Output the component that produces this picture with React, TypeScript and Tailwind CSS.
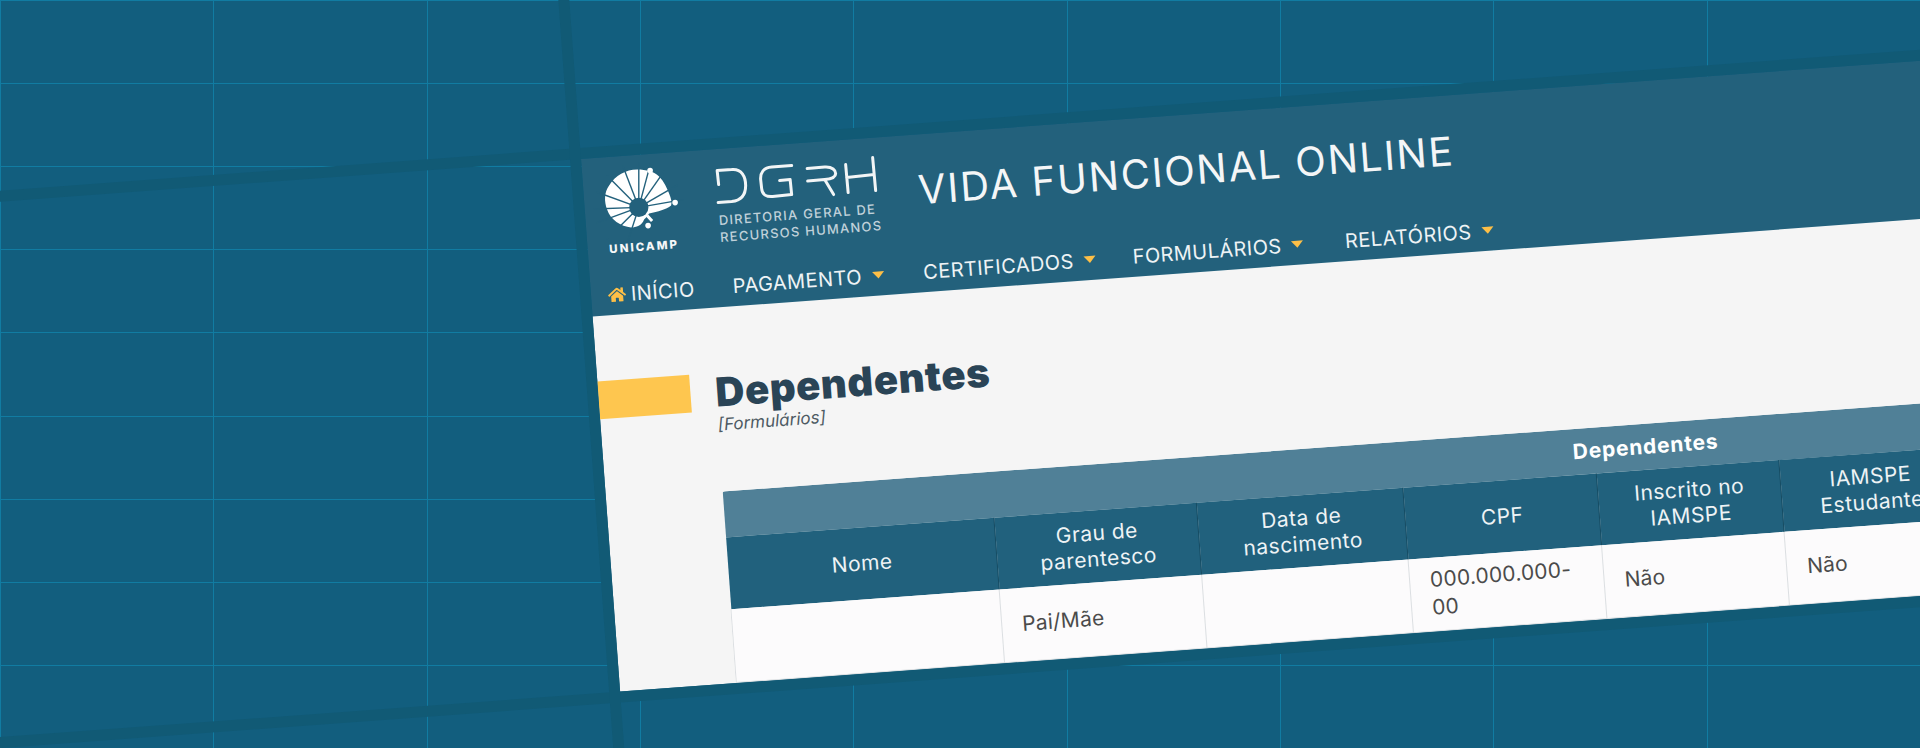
import React from "react";
import { FaHome } from "react-icons/fa";

const font = "font-['Inter','Noto_Sans',sans-serif]";

function Caret() {
  return <span className="ml-[10px] h-0 w-0 border-x-[6px] border-t-[7px] border-x-transparent border-t-[#fdbf47]" />;
}

function UnicampLogo() {
  return (
    <svg viewBox="0 0 80 80" className="h-[80px] w-[80px] overflow-visible">
      <g transform="rotate(4.2)">
        <path
          d="M37 10 C46 10 54 12 59 17 C64 22 67 29 69 34 C71 39 72 42 71 46 C66 50 58 52 49 54 L46 58 L44 60 C42 66 36 68 31 68 C21 67 10 60 7 50 C4 42 4 33 9 26 C15 16 26 10 37 10 Z"
          fill="#ffffff"
        />
        {[-111, -90, -75, -55, -30, -10, 178, 160, 135, 108, -135, -160].map((a) => {
          const r = (a * Math.PI) / 180;
          const x = 38.7 + 45 * Math.cos(r);
          const y = 47.8 + 45 * Math.sin(r);
          return <line key={a} x1="38.7" y1="47.8" x2={x} y2={y} stroke="#23617c" strokeWidth="1.4" />;
        })}
        <circle cx="38.7" cy="47.8" r="9.6" fill="#23617c" />
        <line x1="47" y1="56" x2="52" y2="61.5" stroke="#ffffff" strokeWidth="3" />
        <circle cx="50" cy="11" r="2.8" fill="#ffffff" />
        <circle cx="75" cy="43" r="2.8" fill="#ffffff" />
        <circle cx="48" cy="66" r="2.8" fill="#ffffff" />
      </g>
    </svg>
  );
}

function DgrhLogo() {
  return (
    <svg viewBox="0 0 180 63" className="h-[63px] w-[180px] overflow-visible" fill="none">
      <g transform="rotate(4.2)" stroke="#f2f5f6" strokeWidth="3" strokeLinecap="round" strokeLinejoin="round">
        <path d="M9 35 L7.5 21 L22 20 C32 19 36 27 36 36 C36 45 32 51 22 52 L8.5 53" />
        <path d="M82 16 L62 17.5 C54 18 50.5 23 51 30 L52 39 C52.5 45 57 47.5 63 47 L82 45 L80.5 30 L70 31" />
        <path d="M97.5 19 L115 17.5 C123 17 126 21 126 24 C126 27 123 29.5 115 30 L98 31.5 M115 30 L124 45" />
        <path d="M136 15 L138.5 43 M163 8 L166 41 M137 28 L164.5 25" />
      </g>
    </svg>
  );
}

function Th({ children, last }: { children?: React.ReactNode; last?: boolean }) {
  return (
    <th
      className={
        "h-[72px] bg-[#21617d] px-[8px] text-center align-middle text-[21px] leading-[26px] font-normal tracking-[0.5px] text-[#eef3f5] " +
        (last ? "" : "border-r border-[#174d64]")
      }
    >
      {children}
    </th>
  );
}

function Td({ children }: { children?: React.ReactNode }) {
  return (
    <td className="h-[73px] border-r border-b border-l border-[#dcdfe2] bg-[#fcfbfc] px-[20px] pb-[1px] align-middle text-[21px] leading-[28px] font-normal tracking-[0.2px] text-[#4b4b4b]">
      {children}
    </td>
  );
}

export default function App() {
  return (
    <div className={"relative h-[748px] w-full overflow-hidden bg-[#125e7e] " + font}>
      <div className="grid h-full w-full grid-cols-9 grid-rows-9">
        {Array.from({ length: 81 }).map((_, i) => (
          <div key={i} className="border-t border-l border-[#117ca2]" />
        ))}
      </div>

      <div className="absolute top-[159px] left-[581px] h-[534px] w-[2082px] origin-top-left -rotate-[4.2deg]">
        <div className="absolute -top-[11px] -left-[1000px] h-[11px] w-[4500px] bg-[#115a75]" />
        <div className="absolute top-full -left-[1000px] h-[11px] w-[4500px] bg-[#115a75]" />
        <div className="absolute -top-[1000px] -left-[11px] h-[3000px] w-[11px] bg-[#115a75]" />

        <header className="flex h-[158px] flex-col bg-[#23617c]">
          <div className="flex h-[117px] items-start">
            <div className="mt-[2px] ml-[19px] flex w-[80px] flex-col items-center">
              <UnicampLogo />
              <span className="mt-[4px] mr-[5px] text-[11.5px] leading-[12px] font-extrabold tracking-[2px] text-[#f5f7f8]">
                UNICAMP
              </span>
            </div>
            <div className="ml-[30px] w-[180px]">
              <DgrhLogo />
              <div className="pl-[4px] text-[13px] leading-[17px] font-medium tracking-[1.25px] whitespace-nowrap text-[#c0d1da]">
                <div>DIRETORIA GERAL DE</div>
                <div>RECURSOS HUMANOS</div>
              </div>
            </div>
            <h1 className="mt-[32px] ml-[25px] text-[40px] leading-[48px] font-normal tracking-[1.85px] whitespace-nowrap text-[#f4f6f7]">
              VIDA FUNCIONAL ONLINE
            </h1>
          </div>
          <nav className="flex h-[41px] items-center pl-[17px] text-[20px] leading-[24px] tracking-[0.45px] text-[#eef3f5]">
            <div className="flex w-[125px] items-center">
              <FaHome className="mr-[5px] h-[18px] w-[18px] text-[#fdbf47]" />
              <span>INÍCIO</span>
            </div>
            <div className="flex w-[191px] items-center">
              <span>PAGAMENTO</span>
              <Caret />
            </div>
            <div className="flex w-[210px] items-center">
              <span>CERTIFICADOS</span>
              <Caret />
            </div>
            <div className="flex w-[213px] items-center">
              <span>FORMULÁRIOS</span>
              <Caret />
            </div>
            <div className="flex items-center">
              <span>RELATÓRIOS</span>
              <Caret />
            </div>
          </nav>
        </header>

        <main className="h-[376px] bg-[#f5f5f5] pt-[65px]">
          <div className="flex items-start">
            <div className="h-[38px] w-[92px] bg-[#fec64f]" />
            <div className="ml-[25px]">
              <h2 className="text-[40px] leading-[40px] font-black tracking-[0.6px] text-[#2a4456]">Dependentes</h2>
              <p className="mt-[2px] text-[17px] leading-[20px] text-[#4d5a63] italic">[Formulários]</p>
            </div>
          </div>
          <div className="mt-[57px] ml-[116px] w-[1848px] overflow-hidden rounded-t-[4px]">
            <table className="w-full table-fixed border-collapse">
              <colgroup>
                <col className="w-[269px]" />
                <col className="w-[203px]" />
                <col className="w-[207px]" />
                <col className="w-[194px]" />
                <col className="w-[183px]" />
                <col className="w-[180px]" />
                <col className="w-[612px]" />
              </colgroup>
              <thead>
                <tr>
                  <th colSpan={7} className="h-[46px] bg-[#508097] text-center text-[21px] font-bold tracking-[0.8px] text-[#ffffff]">
                    Dependentes
                  </th>
                </tr>
                <tr>
                  <Th>Nome</Th>
                  <Th>
                    Grau de
                    <br />
                    parentesco
                  </Th>
                  <Th>
                    Data de
                    <br />
                    nascimento
                  </Th>
                  <Th>CPF</Th>
                  <Th>
                    Inscrito no
                    <br />
                    IAMSPE
                  </Th>
                  <Th>
                    IAMSPE
                    <br />
                    Estudante
                  </Th>
                  <Th last />
                </tr>
              </thead>
              <tbody>
                <tr>
                  <Td />
                  <Td>Pai/Mãe</Td>
                  <Td />
                  <Td>
                    000.000.000-
                    <br />
                    00
                  </Td>
                  <Td>Não</Td>
                  <Td>Não</Td>
                  <Td />
                </tr>
              </tbody>
            </table>
          </div>
        </main>
      </div>
    </div>
  );
}
